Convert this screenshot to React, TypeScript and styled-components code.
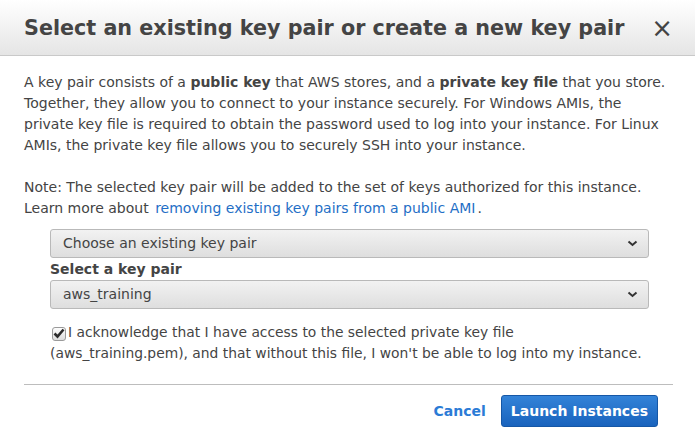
import styled, { createGlobalStyle } from "styled-components";

const GlobalStyle = createGlobalStyle`
	html, body {
		margin: 0;
		padding: 0;
		background: #ffffff;
	}
	body {
		font-family: "DejaVu Sans", "Liberation Sans", sans-serif;
		color: #444444;
	}
`;

const Chevron = () => (
	<svg width="11" height="7" viewBox="0 0 11 7">
		<path d="M1.5 1.5 L5.5 5 L9.5 1.5" fill="none" stroke="#333" strokeWidth="2" />
	</svg>
);

const App = () => {
	return (
		<>
			<GlobalStyle />
			<Dialog>
				<Header>
					<Title>Select an existing key pair or create a new key pair</Title>
					<CloseButton aria-label="close">×</CloseButton>
				</Header>
				<Body>
					<Paragraph>
						A key pair consists of a <b>public key</b> that AWS stores, and a <b>private key file</b> that you
						store. Together, they allow you to connect to your instance securely. For Windows AMIs, the
						private key file is required to obtain the password used to log into your instance. For Linux
						AMIs, the private key file allows you to securely SSH into your instance.
					</Paragraph>
					<Paragraph>
						Note: The selected key pair will be added to the set of keys authorized for this instance.
						<br />
						Learn more about <Link href="#">removing existing key pairs from a public AMI</Link>.
					</Paragraph>
					<Form>
						<Select>
							<span>Choose an existing key pair</span>
							<Chevron />
						</Select>
						<Label>Select a key pair</Label>
						<Select>
							<span>aws_training</span>
							<Chevron />
						</Select>
						<Acknowledge>
							<CheckBox>
								<svg width="12" height="11" viewBox="0 0 12 11">
									<path d="M1.5 5.5 L4.5 8.5 L10.5 1.5" fill="none" stroke="#2b2b2b" strokeWidth="2.6" />
								</svg>
							</CheckBox>
							I acknowledge that I have access to the selected private key file
							<br />
							(aws_training.pem), and that without this file, I won't be able to log into my instance.
						</Acknowledge>
					</Form>
				</Body>
				<Footer>
					<CancelButton>Cancel</CancelButton>
					<PrimaryButton>Launch Instances</PrimaryButton>
				</Footer>
			</Dialog>
		</>
	);
};

export default App;

const Dialog = styled.div`
	width: 695px;
	height: 445px;
	display: flex;
	flex-direction: column;
	background: #ffffff;
`;

const Header = styled.div`
	height: 56px;
	box-sizing: border-box;
	display: flex;
	align-items: center;
	justify-content: space-between;
	padding: 0 22px 0 24px;
	background: linear-gradient(#ffffff, #e5e5e5);
	border-bottom: 1px solid #c9c9c9;
`;

const Title = styled.h1`
	margin: 0;
	font-size: 20.7px;
	font-weight: bold;
	color: #444444;
	white-space: nowrap;
`;

const CloseButton = styled.button`
	border: none;
	background: none;
	padding: 0;
	font-family: "DejaVu Sans", sans-serif;
	font-size: 26px;
	line-height: 1;
	color: #444444;
	cursor: pointer;
`;

const Body = styled.div`
	padding: 16px 24px 0 24px;
	font-size: 14px;
	line-height: 21px;
`;

const Paragraph = styled.p`
	margin: 0 0 21px 0;

	&:last-of-type {
		margin-bottom: 10px;
	}

	b {
		font-weight: bold;
	}
`;

const Link = styled.a`
	color: #1f6fc6;
	text-decoration: none;
	margin-left: 2px;
	margin-right: 2px;
`;

const Form = styled.div`
	display: flex;
	flex-direction: column;
	margin: 0 22px 0 26px;
`;

const Select = styled.div`
	height: 29px;
	box-sizing: border-box;
	display: flex;
	align-items: center;
	justify-content: space-between;
	padding: 0 10px 0 12px;
	border: 1px solid #b9b9b9;
	border-radius: 3px;
	background: linear-gradient(#f2f2f2, #dedede);
	color: #444444;
	font-size: 14px;
`;

const Label = styled.div`
	font-weight: bold;
	line-height: 21px;
	margin-top: 1px;
`;

const Acknowledge = styled.div`
	margin-top: 13px;
	font-size: 13.85px;
	line-height: 21px;
	white-space: nowrap;
`;

const CheckBox = styled.span`
	display: inline-flex;
	align-items: center;
	justify-content: center;
	width: 14px;
	height: 14px;
	box-sizing: border-box;
	margin: 0 2px 0 2px;
	vertical-align: -2px;
	border: 1px solid #9a9a9a;
	border-radius: 3px;
	background: linear-gradient(#fdfdfd, #dcdcdc);
`;

const Footer = styled.div`
	margin: 20px 22px 0 24px;
	padding-top: 10px;
	border-top: 1px solid #bdbdbd;
	display: flex;
	justify-content: flex-end;
	align-items: center;
	gap: 15px;
	padding-right: 15px;
`;

const CancelButton = styled.button`
	border: none;
	background: none;
	padding: 0;
	font-family: "DejaVu Sans", sans-serif;
	font-size: 14px;
	font-weight: bold;
	color: #2b7bd6;
	cursor: pointer;
`;

const PrimaryButton = styled.button`
	height: 32px;
	padding: 0 9px;
	box-sizing: border-box;
	border: 1px solid #1557a6;
	border-radius: 3px;
	background: linear-gradient(#3383d8, #1963bd);
	color: #ffffff;
	font-family: "DejaVu Sans", sans-serif;
	font-size: 14px;
	font-weight: bold;
	cursor: pointer;
`;
